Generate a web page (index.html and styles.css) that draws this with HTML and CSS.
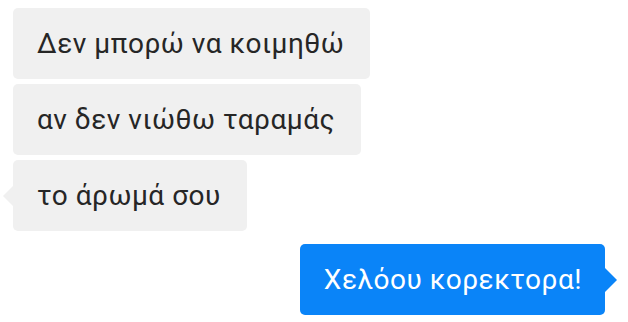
FILE: index.html
```html
<!DOCTYPE html>
<html lang="el">
<head>
<meta charset="utf-8">
<link rel="stylesheet" href="styles.css">
</head>
<body>
<div class="chat">
  <div class="msg in">Δεν μπορώ να κοιμηθώ</div>
  <div class="msg in">αν δεν νιώθω ταραμάς</div>
  <div class="msg in last">το άρωμά σου</div>
  <div class="msg out last">Χελόου κορεκτορα!</div>
</div>
</body>
</html>
```
FILE: styles.css
```css
html, body {
  margin: 0;
  padding: 0;
  background: #ffffff;
}
.chat {
  display: flex;
  flex-direction: column;
  align-items: flex-start;
  gap: 5px;
  padding: 8px 23px 0 13px;
  font-family: Roboto, "Noto Sans", sans-serif;
}
.msg {
  position: relative;
  font-size: 28px;
  line-height: 35px;
  letter-spacing: 0.5px;
  padding: 18px 26px 18px 24px;
  border-radius: 5px;
}
.in {
  background: #f0f0f0;
  color: #262626;
}
.out {
  align-self: flex-end;
  margin-top: 8px;
  background: #0a84f8;
  color: #ffffff;
  padding: 18px 23px 18px 24px;
}
.in.last::before {
  content: "";
  position: absolute;
  left: -10px;
  top: 50%;
  margin-top: -10px;
  border-style: solid;
  border-width: 10px 10px 10px 0;
  border-color: transparent #f0f0f0 transparent transparent;
}
.out.last::after {
  content: "";
  position: absolute;
  right: -12px;
  top: 50%;
  margin-top: -12px;
  border-style: solid;
  border-width: 12px 0 12px 12px;
  border-color: transparent transparent transparent #0a84f8;
}
```
